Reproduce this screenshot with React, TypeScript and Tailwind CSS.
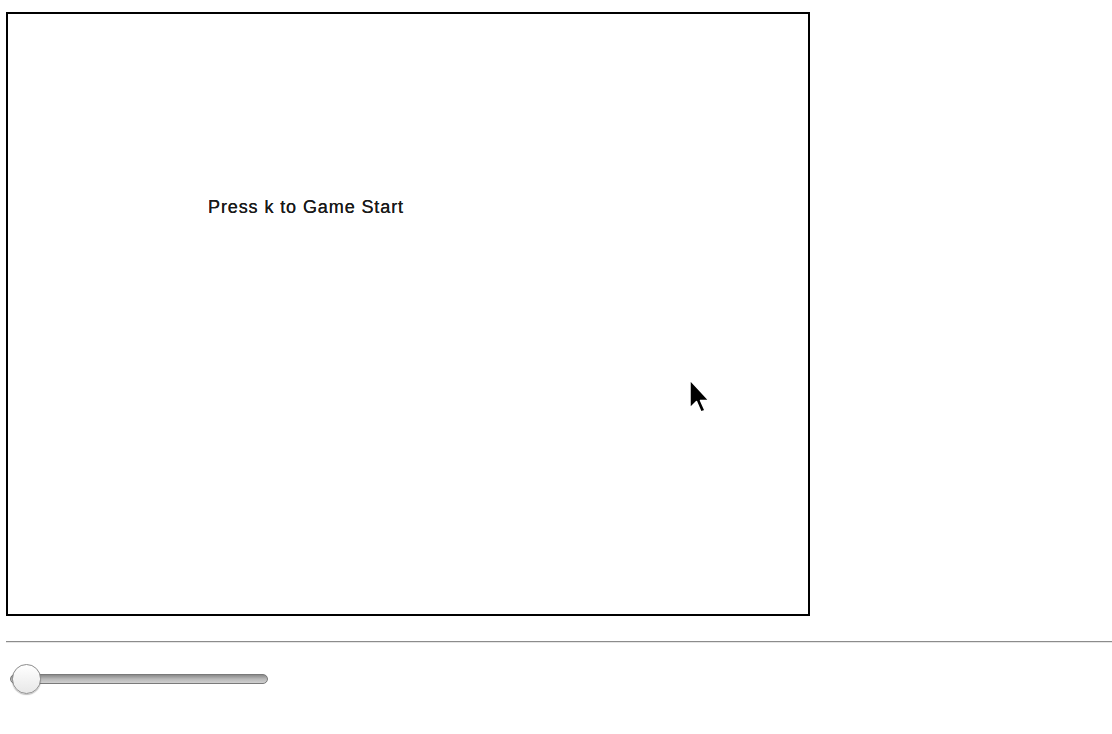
export default function App() {
  return (
    <div className="min-h-[734px] bg-white pt-[12px] font-['Liberation_Sans',Arial,sans-serif]">
      {/* Game canvas */}
      <div className="relative ml-[6px] w-[804px] h-[604px] border-2 border-black bg-white">
        <span className="absolute left-[200px] top-[182px] text-[18px] leading-[22px] tracking-[0.9px] text-[#1a1a1a] [text-shadow:0_0_0.4px_#111]">
          Press k to Game Start
        </span>
        <svg
          className="absolute left-[680px] top-[364px]"
          width="24"
          height="38"
          viewBox="0 0 24 38"
        >
          <path
            d="M2 2 L2 30 L8.5 23.5 L13 34 L17 32.5 L12.5 22.5 L21 22.5 Z"
            fill="black"
            stroke="white"
            strokeWidth="1.5"
            strokeLinejoin="round"
          />
        </svg>
      </div>

      <div className="mt-[25px] ml-[6px] h-[2px] border-t border-[#8c8c8c] border-b border-b-[#e6e6e6]" />

      {/* Slider */}
      <div className="relative ml-[10px] mt-[21px] w-[258px] h-[30px] flex items-center">
        <div className="w-full h-[10px] rounded-full bg-gradient-to-b from-[#8a8a8a] via-[#b9b9b9] to-[#d0d0d0] border border-[#7a7a7a]" />
        <div className="absolute left-[2px] top-0 w-[29px] h-[30px] rounded-full border border-[#8d8d8d] bg-gradient-to-b from-[#ffffff] to-[#e8e8e8] shadow-[0_1px_1px_rgba(0,0,0,0.25)]" />
      </div>
    </div>
  );
}
